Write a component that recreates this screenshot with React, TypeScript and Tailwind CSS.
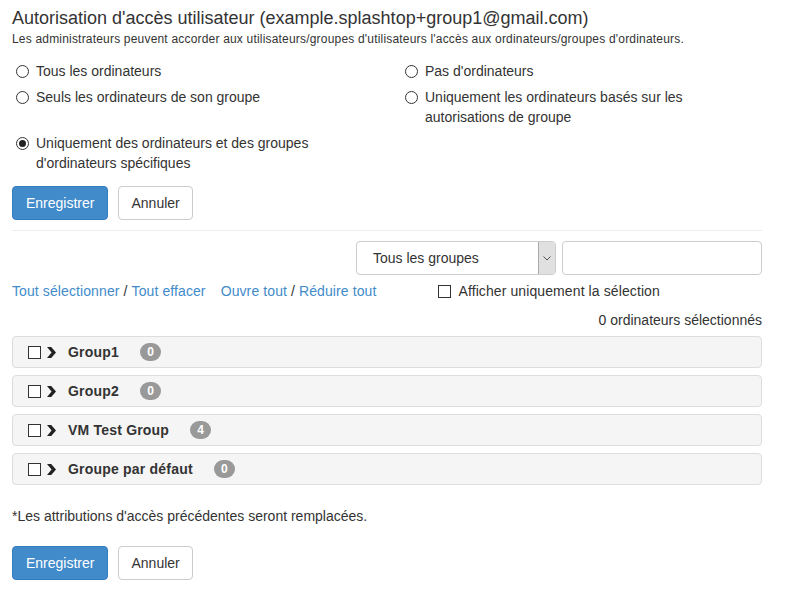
import { useState } from "react";

const groups = [
  { name: "Group1", count: 0 },
  { name: "Group2", count: 0 },
  { name: "VM Test Group", count: 4 },
  { name: "Groupe par défaut", count: 0 },
];

function Radio({ checked, label }: { checked?: boolean; label: string }) {
  return (
    <label className="flex items-start gap-[7px] leading-[20px]">
      <span className="mt-[4px] flex h-[13px] w-[13px] shrink-0 items-center justify-center rounded-full border border-[#333] bg-white">
        {checked && <span className="h-[7px] w-[7px] rounded-full bg-[#222]" />}
      </span>
      <span>{label}</span>
    </label>
  );
}

function Check() {
  return <span className="inline-block h-[13px] w-[13px] shrink-0 border border-[#333] bg-white" />;
}

function Buttons() {
  return (
    <div className="flex gap-[10px]">
      <button className="h-[34px] rounded-[4px] border border-[#357ebd] bg-[#428bca] px-[13px] text-[14px] text-white">
        Enregistrer
      </button>
      <button className="h-[34px] rounded-[4px] border border-[#ccc] bg-white px-[12px] text-[14px] text-[#333]">
        Annuler
      </button>
    </div>
  );
}

export default function App() {
  const [search, setSearch] = useState("");

  return (
    <div className="min-h-[593px] bg-white px-[12px] pt-[7px] text-[14px] text-[#333] font-['Liberation_Sans',Arial,sans-serif]">
      {/* Header */}
      <h1 className="text-[18px] leading-[22px]">
        Autorisation d'accès utilisateur (example.splashtop+group1@gmail.com)
      </h1>
      <p className="mt-[2px] text-[12px] leading-[16px] tracking-[0.19px]">
        Les administrateurs peuvent accorder aux utilisateurs/groupes d'utilisateurs l'accès aux ordinateurs/groupes d'ordinateurs.
      </p>

      {/* Access options */}
      <div className="mt-[14px] grid w-[750px] grid-cols-[389px_1fr] gap-y-[6px] pl-[4px]">
        <Radio label="Tous les ordinateurs" />
        <Radio label="Pas d'ordinateurs" />
        <Radio label="Seuls les ordinateurs de son groupe" />
        <div className="w-[300px]">
          <Radio label="Uniquement les ordinateurs basés sur les autorisations de groupe" />
        </div>
        <div className="w-[310px]">
          <Radio checked label="Uniquement des ordinateurs et des groupes d'ordinateurs spécifiques" />
        </div>
      </div>

      <div className="mt-[13px]">
        <Buttons />
      </div>

      <hr className="mt-[10px] w-[750px] border-t border-[#eee]" />

      {/* Filters */}
      <div className="mt-[10px] flex w-[750px] justify-end gap-[6px]">
        <div className="flex h-[34px] w-[200px] overflow-hidden rounded-[4px] border border-[#ccc]">
          <span className="flex flex-1 items-center pl-[16px]">Tous les groupes</span>
          <span className="flex w-[17px] items-center justify-center border-l border-[#aaa] bg-[#e0e0e0]">
            <svg width="8" height="5" viewBox="0 0 8 5" fill="none">
              <path d="M0.5 0.5 L4 4 L7.5 0.5" stroke="#555" strokeWidth="1" />
            </svg>
          </span>
        </div>
        <input
          value={search}
          onChange={(e) => setSearch(e.target.value)}
          className="h-[34px] w-[200px] rounded-[4px] border border-[#ccc] px-[8px] outline-none"
        />
      </div>

      <div className="mt-[6px] flex w-[750px] items-center leading-[20px] tracking-[0.1px]">
        <span className="text-[#428bca]">Tout sélectionner</span>
        <span>&nbsp;/&nbsp;</span>
        <span className="text-[#428bca]">Tout effacer</span>
        <span className="ml-[15px] text-[#428bca]">Ouvre tout</span>
        <span>&nbsp;/&nbsp;</span>
        <span className="text-[#428bca]">Réduire tout</span>
        <label className="ml-[62px] flex items-center gap-[7px]">
          <Check />
          <span>Afficher uniquement la sélection</span>
        </label>
      </div>

      <div className="mt-[9px] w-[750px] text-right leading-[20px]">0 ordinateurs sélectionnés</div>

      {/* Group list */}
      <div className="mt-[6px] flex w-[750px] flex-col gap-[7px]">
        {groups.map((g) => (
          <div
            key={g.name}
            className="flex h-[32px] items-center rounded-[4px] border border-[#ddd] bg-[#f5f5f5] pl-[15px]"
          >
            <Check />
            <svg className="ml-[6px]" width="9" height="11" viewBox="0 0 9 11">
              <path d="M0 0 H4.2 L9 5.5 L4.2 11 H0 L4.6 5.5 Z" fill="#222" />
            </svg>
            <span className="ml-[12px] font-bold tracking-[0.2px]">{g.name}</span>
            <span className="ml-[21px] flex h-[18px] min-w-[21px] items-center justify-center rounded-[10px] bg-[#999] px-[6px] text-[12px] font-bold text-white">
              {g.count}
            </span>
          </div>
        ))}
      </div>

      <p className="mt-[21px] leading-[20px]">*Les attributions d'accès précédentes seront remplacées.</p>

      <div className="mt-[20px] pb-[14px]">
        <Buttons />
      </div>
    </div>
  );
}
